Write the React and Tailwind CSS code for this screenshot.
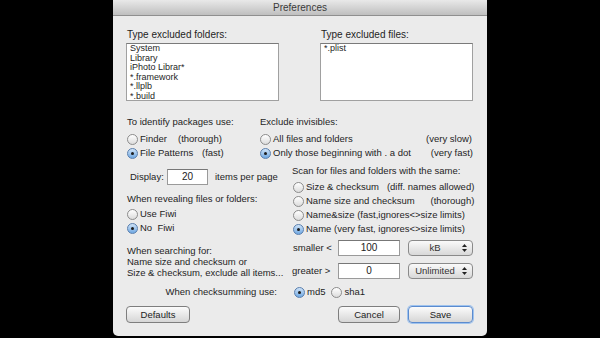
import React from "react";

const font = { fontFamily: '"Liberation Sans", Arial, sans-serif' };

// Aqua-style radio button
const Radio = ({ checked }) => (
  <span
    className={
      "inline-flex items-center justify-center w-[11px] h-[11px] rounded-full border shrink-0 " +
      (checked
        ? "border-[#5a7fae] bg-gradient-to-b from-[#cfe3f7] to-[#6fa8e2]"
        : "border-[#8c8c8c] bg-gradient-to-b from-[#ffffff] to-[#dcdcdc]")
    }
  >
    {checked && <span className="w-[3px] h-[3px] rounded-full bg-[#1c1c1c]" />}
  </span>
);

const RadioRow = ({ checked, children, className = "" }) => (
  <div className={"flex items-center gap-[2px] h-[14px] whitespace-nowrap " + className}>
    <Radio checked={checked} />
    {children}
  </div>
);

const Field = ({ value, className = "" }) => (
  <div
    className={
      "h-[16px] bg-white border border-[#9a9a9a] border-t-[#777] flex items-center justify-center text-[10px] text-[#222] " +
      className
    }
  >
    {value}
  </div>
);

const Popup = ({ label }) => (
  <div className="w-[65px] h-[16px] rounded-[4px] border border-[#8a8a8a] bg-gradient-to-b from-[#fafafa] to-[#d8d8d8] flex items-center text-[9.5px] text-[#333]">
    <span className="flex-1 text-center">{label}</span>
    <svg width="7" height="10" viewBox="0 0 7 10" className="mr-[4px]">
      <path d="M3.5 1 L6 4 H1 Z" fill="#222" />
      <path d="M3.5 9 L6 6 H1 Z" fill="#222" />
    </svg>
  </div>
);

const Button = ({ label, focus, className = "" }) => (
  <div
    className={
      "h-[17px] rounded-[4px] border flex items-center justify-center text-[9.5px] text-[#222] bg-gradient-to-b from-[#fbfbfb] to-[#d6d6d6] " +
      (focus
        ? "border-[#5b8bcf] shadow-[0_0_0_1px_#9fc3ee] "
        : "border-[#7e7e7e] ") +
      className
    }
  >
    {label}
  </div>
);

export default function App() {
  const folders = ["System", "Library", "iPhoto Librar*", "*.framework", "*.llplb", "*.build"];

  return (
    <div className="w-[600px] h-[338px] bg-black flex justify-center" style={font}>
      <div className="w-[374px] h-[336px] bg-[#ebebeb] rounded-b-[5px] flex flex-col text-[9.5px] text-[#1e1e1e] leading-none">
        {/* Title bar */}
        <div className="h-[16px] shrink-0 bg-gradient-to-b from-[#e9e9e9] to-[#bfbfbf] border-b border-[#8f8f8f] flex items-center justify-center text-[10px] text-[#3a3a3a]">
          Preferences
        </div>

        {/* Excluded folders / files */}
        <div className="flex justify-between pl-[13px] pr-[14px] mt-[14px]">
          <div className="w-[153px]">
            <div className="pl-[1px] h-[13px] text-[10px]">Type excluded folders:</div>
            <div className="h-[58px] bg-white border border-[#a0a0a0] border-t-[#7a7a7a] px-[3px] text-[9px] leading-[9.5px] overflow-hidden">
              {folders.map((f) => (
                <div key={f}>{f}</div>
              ))}
            </div>
          </div>
          <div className="w-[153px]">
            <div className="pl-[1px] h-[13px] text-[10px]">Type excluded files:</div>
            <div className="h-[58px] bg-white border border-[#a0a0a0] border-t-[#7a7a7a] px-[3px] text-[9px] leading-[9.5px]">
              <div>*.plist</div>
            </div>
          </div>
        </div>

        {/* Packages / invisibles */}
        <div className="flex pl-[14px] pr-[14px] mt-[16px]">
          <div className="w-[133px] shrink-0">
            <div className="h-[13px]">To identify packages use:</div>
            <RadioRow className="mt-[2px]">
              <span className="w-[36px]">Finder</span>
              <span>(thorough)</span>
            </RadioRow>
            <RadioRow checked>
              <span className="w-[60px]">File Patterns</span>
              <span>(fast)</span>
            </RadioRow>
          </div>
          <div className="flex-1">
            <div className="h-[13px]">Exclude invisibles:</div>
            <RadioRow className="mt-[2px]">
              <span className="flex-1">All files and folders</span>
              <span className="mr-[1px]">(very slow)</span>
            </RadioRow>
            <RadioRow checked>
              <span className="flex-1">Only those beginning with . a dot</span>
              <span>(very fast)</span>
            </RadioRow>
          </div>
        </div>

        {/* Display / revealing / scan */}
        <div className="flex pl-[14px] pr-[14px] mt-[6px]">
          <div className="w-[165px] shrink-0">
            <div className="flex items-center h-[16px] mt-[3px]">
              <span className="ml-[3px] w-[37px]">Display:</span>
              <Field value="20" className="w-[41px] h-[15px]" />
              <span className="ml-[7px]">items per page</span>
            </div>
            <div className="mt-[8px] h-[12px] pt-[1px]">When revealing files or folders:</div>
            <RadioRow className="mt-[2px]">
              <span>Use Fiwi</span>
            </RadioRow>
            <RadioRow checked>
              <span>No&nbsp;&nbsp;Fiwi</span>
            </RadioRow>
          </div>
          <div className="flex-1">
            <div className="h-[13px]">Scan for files and folders with the same:</div>
            <div className="mt-[1px] pl-[1px]">
              <RadioRow>
                <span>Size &amp; checksum</span>
                <span className="ml-[6px]">(diff. names allowed)</span>
              </RadioRow>
              <RadioRow>
                <span className="flex-1">Name size and checksum</span>
                <span>(thorough)</span>
              </RadioRow>
              <RadioRow>
                <span>Name&amp;size (fast,ignores&lt;&gt;size limits)</span>
              </RadioRow>
              <RadioRow checked>
                <span>Name (very fast, ignores&lt;&gt;size limits)</span>
              </RadioRow>
            </div>
          </div>
        </div>

        {/* Searching limits */}
        <div className="flex pl-[14px] pr-[14px] mt-[4px]">
          <div className="w-[165px] shrink-0 pt-[5px] leading-[11px] whitespace-nowrap">
            <div>When searching for:</div>
            <div>Name size and checksum or</div>
            <div>Size &amp; checksum, exclude all items...</div>
          </div>
          <div className="flex-1 flex flex-col gap-[7px]">
            <div className="flex items-center">
              <span className="w-[46px] pl-[1px]">smaller &lt;</span>
              <Field value="100" className="w-[62px]" />
              <span className="ml-[8px]">
                <Popup label="kB" />
              </span>
            </div>
            <div className="flex items-center">
              <span className="w-[46px]">greater &gt;</span>
              <Field value="0" className="w-[62px]" />
              <span className="ml-[8px]">
                <Popup label="Unlimited" />
              </span>
            </div>
          </div>
        </div>

        {/* Checksumming */}
        <div className="flex items-center pl-[14px] mt-[6px] h-[14px]">
          <span className="w-[150px] text-right">When checksumming use:</span>
          <div className="ml-[17px] flex items-center gap-[6px]">
            <RadioRow checked>
              <span>md5</span>
            </RadioRow>
            <RadioRow>
              <span>sha1</span>
            </RadioRow>
          </div>
        </div>

        {/* Buttons */}
        <div className="flex items-center pl-[13px] pr-[14px] mt-[7px]">
          <Button label="Defaults" className="w-[64px]" />
          <div className="flex-1" />
          <Button label="Cancel" className="w-[62px]" />
          <Button label="Save" focus className="w-[65px] ml-[8px]" />
        </div>
      </div>
    </div>
  );
}
